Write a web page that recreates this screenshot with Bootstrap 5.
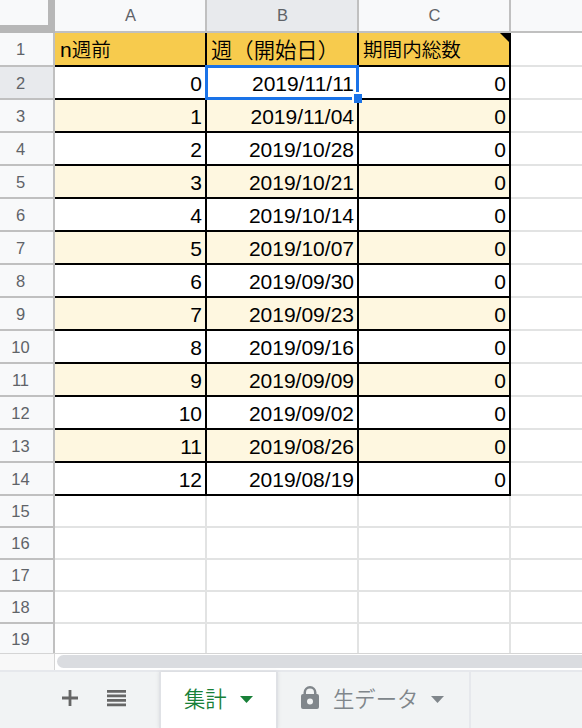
<!DOCTYPE html>
<html lang="ja">
<head>
<meta charset="utf-8">
<meta name="viewport" content="width=device-width, initial-scale=1">
<title>集計</title>
<link href="https://cdn.jsdelivr.net/npm/bootstrap@5.3.0/dist/css/bootstrap.min.css" rel="stylesheet">
<style>
body{width:582px;height:728px;font-family:"Liberation Sans","Noto Sans CJK JP",sans-serif;color:#000}
.sheet-area{height:653px}
.sheet{table-layout:fixed;width:582px;border-collapse:separate;border-spacing:0}
.sheet th,.sheet td{box-sizing:border-box;padding:0;border:0 solid #e2e3e3;border-width:0 2px 2px 0;white-space:nowrap;line-height:28px}
.sheet th{background:#f8f9fa;border-color:#c0c0c0;color:#5f6368;font-weight:400;font-size:16.5px;text-align:center}
.sheet tbody th{padding-right:12px}
.sheet thead tr{height:33px}
.sheet thead th{padding:0 0 1px 1px}
.sheet thead .corner{border-color:#b7b7b7;border-width:0 7px 8px 0;padding:0}
.sheet .picked{background:#e8eaed}
.sheet th:last-child,.sheet td:last-child{border-right-width:0}
.sheet tbody tr{height:32px}
.sheet .filled{height:33px}
.sheet .filled td{font-size:21px;text-align:right;padding:3px 3px 0 0;vertical-align:top}
.sheet .filled td:not(:last-child){border-color:#000}
.sheet .banded td:not(:last-child){background:#fef7e0}
.sheet .titles td{text-align:left;padding:2px 0 0 5px}
.sheet .titles td:nth-child(n+3){padding-left:4px}
.sheet .titles td:not(:last-child){background:#f7cb4d}
.sheet .titles .narrow-kana{font-size:19.6px}
.kana{font-family:"Noto Sans CJK JP",sans-serif;font-weight:350;font-size:21.33px}
.note-mark{top:0;right:0;width:9px;height:9px;background:#000;clip-path:polygon(0 0,100% 0,100% 100%)}
.cursor-box{left:-2px;top:-2px;width:154px;height:35px;border:3px solid #1a73e8}
.cursor-grip{right:-6px;bottom:-6px;width:10px;height:11px;border:2px solid #fff;border-width:2px 0 0 2px;background:#1a73e8}
.scroll-row{height:17px;border-top:1px solid #d5d5d5}
.scroll-gap{width:55px;background:#f8f8f8;border-right:1px solid #d5d5d5}
.scroll-thumb{height:13px;margin:1px 0 0 2px;background:#dadce0;border-radius:7px 0 0 7px}
.tab-bar{height:58px;background:#f1f3f4;border-top:2px solid #e6e8ec;font-size:21.33px}
.tools{width:159px;padding:0 0 4px 60px}
.sheet-tab{border-right:2px solid #e6e8ec;padding-bottom:4px}
.tab-on{width:119px;background:#fff;color:#188038;border-left:2px solid #e0e2e6;border-right-color:#dfe1e5;padding-left:23px;box-shadow:0 0 4px #00000018}
.tab-off{width:193px;color:#80868b;padding-left:23px}
.caret{margin:3px 0 0 13px}
.lock{margin-right:14px}
</style>
<script src="https://cdn.jsdelivr.net/npm/bootstrap@5.3.0/dist/js/bootstrap.bundle.min.js"></script>
</head>
<body class="bg-white overflow-hidden d-flex flex-column">
<main class="sheet-area overflow-hidden flex-shrink-0">
<table class="sheet">
<colgroup><col style="width:55px"><col style="width:152px"><col style="width:152px"><col style="width:152px"><col style="width:71px"></colgroup>
<thead><tr><th class="corner"></th><th>A</th><th class="picked">B</th><th>C</th><th></th></tr></thead>
<tbody>
<tr class="filled titles"><th>1</th><td>n<span class="kana narrow-kana">週前</span></td><td><span class="kana">週（開始日）</span></td><td class="position-relative"><span class="kana narrow-kana">期間内総数</span><i class="note-mark position-absolute"></i></td><td></td></tr>
<tr class="filled"><th class="picked">2</th><td>0</td><td class="position-relative">2019/11/11<div class="cursor-box position-absolute"><i class="cursor-grip position-absolute"></i></div></td><td>0</td><td></td></tr>
<tr class="filled banded"><th>3</th><td>1</td><td>2019/11/04</td><td>0</td><td></td></tr>
<tr class="filled"><th>4</th><td>2</td><td>2019/10/28</td><td>0</td><td></td></tr>
<tr class="filled banded"><th>5</th><td>3</td><td>2019/10/21</td><td>0</td><td></td></tr>
<tr class="filled"><th>6</th><td>4</td><td>2019/10/14</td><td>0</td><td></td></tr>
<tr class="filled banded"><th>7</th><td>5</td><td>2019/10/07</td><td>0</td><td></td></tr>
<tr class="filled"><th>8</th><td>6</td><td>2019/09/30</td><td>0</td><td></td></tr>
<tr class="filled banded"><th>9</th><td>7</td><td>2019/09/23</td><td>0</td><td></td></tr>
<tr class="filled"><th>10</th><td>8</td><td>2019/09/16</td><td>0</td><td></td></tr>
<tr class="filled banded"><th>11</th><td>9</td><td>2019/09/09</td><td>0</td><td></td></tr>
<tr class="filled"><th>12</th><td>10</td><td>2019/09/02</td><td>0</td><td></td></tr>
<tr class="filled banded"><th>13</th><td>11</td><td>2019/08/26</td><td>0</td><td></td></tr>
<tr class="filled"><th>14</th><td>12</td><td>2019/08/19</td><td>0</td><td></td></tr>
<tr><th>15</th><td></td><td></td><td></td><td></td></tr>
<tr><th>16</th><td></td><td></td><td></td><td></td></tr>
<tr><th>17</th><td></td><td></td><td></td><td></td></tr>
<tr><th>18</th><td></td><td></td><td></td><td></td></tr>
<tr><th>19</th><td></td><td></td><td></td><td></td></tr>
</tbody>
</table>
</main>
<div class="scroll-row d-flex flex-shrink-0"><div class="scroll-gap"></div><div class="scroll-thumb flex-grow-1"></div></div>
<footer class="tab-bar d-flex flex-shrink-0">
<div class="tools d-flex align-items-center flex-shrink-0">
<svg width="68" height="20" viewBox="0 0 68 20" fill="#666"><path d="M8.600 2h2.800v6.600H18v2.800h-6.600V18H8.600v-6.600H2V8.600h6.600zM47 2h19v2.800H47zM47 6.500h19v2.800H47zM47 11h19v2.800H47zM47 15.500h19v2.800H47z"/></svg>
</div>
<div class="sheet-tab tab-on d-flex align-items-center flex-shrink-0"><span class="kana">集計</span><svg class="caret" width="13" height="7" viewBox="0 0 13 7" fill="currentColor"><path d="M0 0h13L6.500 7z"/></svg></div>
<div class="sheet-tab tab-off d-flex align-items-center flex-shrink-0"><svg class="lock" width="18" height="24" viewBox="0 0 18 24" fill="currentColor" fill-rule="evenodd"><path d="M2.500 8V6.500a6.500 6.500 0 0 1 13 0V8H16a2 2 0 0 1 2 2v11a2 2 0 0 1-2 2H2a2 2 0 0 1-2-2V10a2 2 0 0 1 2-2zM5 8h8V6.500a4 4 0 0 0-8 0zM9 12.500a3 3 0 1 0 0 6 3 3 0 0 0 0-6z"/></svg><span class="kana">生データ</span><svg class="caret" width="13" height="7" viewBox="0 0 13 7" fill="currentColor"><path d="M0 0h13L6.500 7z"/></svg></div>
</footer>
</body>
</html>
